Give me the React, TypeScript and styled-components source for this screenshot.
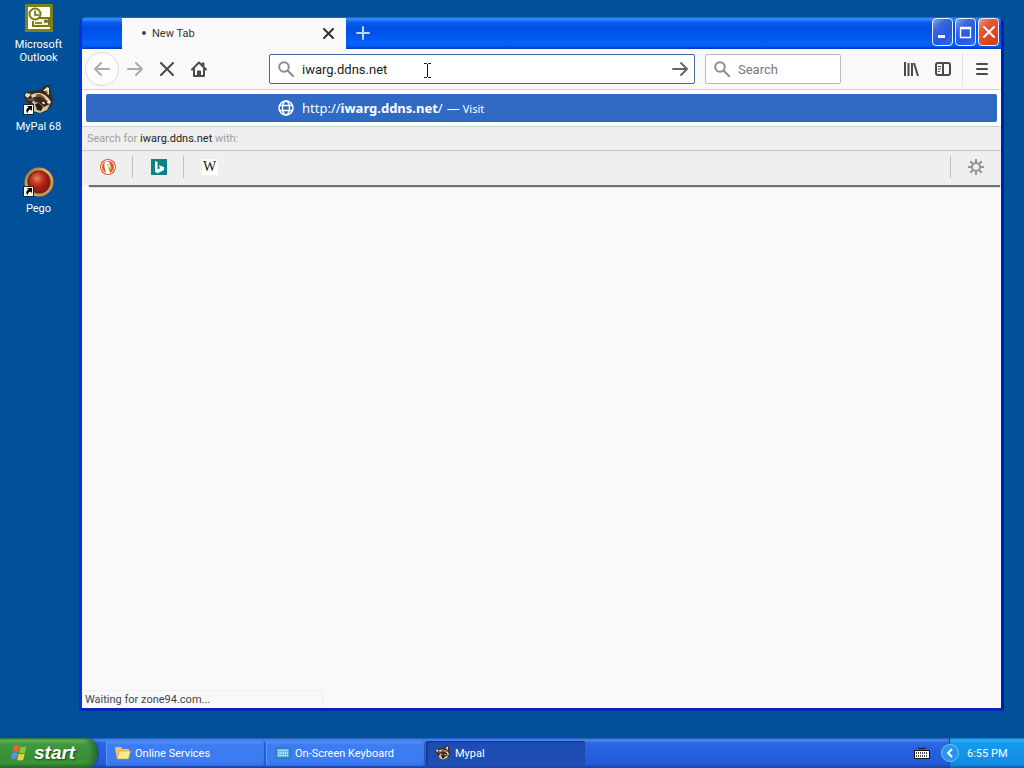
import React from 'react';
import styled, { createGlobalStyle, css } from 'styled-components';

const GlobalStyle = createGlobalStyle`
  *, *::before, *::after { box-sizing: border-box; }
  body {
    margin: 0;
    background: #00509a;
    font-family: Tahoma, Roboto, "Noto Sans", sans-serif;
    font-size: 11px;
    line-height: 13px;
    color: #333;
  }
  button, input { font: inherit; color: inherit; margin: 0; padding: 0; border: 0; background: none; }
  svg { display: block; flex: none; }
`;

/* ---------- desktop ---------- */

const Desktop = styled.div`
  min-height: 100vh;
  display: flex;
  flex-direction: column;
  background: #00509a;
`;

const Workspace = styled.main`
  flex: 1;
  display: flex;
  padding: 0 20px 27px 0;
`;

const Shortcuts = styled.nav`
  flex: none;
  width: 79px;
  padding-top: 2px;
`;

const Shortcut = styled.button`
  display: flex;
  flex-direction: column;
  align-items: center;
  justify-content: flex-start;
  gap: 4px;
  width: 77px;
  height: 82px;
  color: #fff;
  text-align: center;
`;

/* ---------- browser window ---------- */

const BrowserWindow = styled.section`
  flex: 1;
  min-width: 0;
  margin-top: 17px;
  display: flex;
  flex-direction: column;
  border: solid;
  border-width: 0 3px 3px;
  border-color: #0a3fe0 #001ea8 #0526b8 #0a30d8;
  border-radius: 7px 7px 0 0;
  background: #0058e6;
`;

const TitleBar = styled.header`
  height: 32px;
  display: flex;
  align-items: flex-end;
  padding: 0 2px 0 40px;
  border-radius: 4px 4px 0 0;
  background: linear-gradient(#0a5be8 0, #3a8dfd 2px, #0a60f0 5px, #0050e6 10px, #0055ea 18px, #0062fc 26px, #005cf5 29px, #0036b8 32px);
`;

const Tab = styled.div`
  display: flex;
  align-items: center;
  width: 224px;
  height: 31px;
  padding: 0 12px 1px 20px;
  background: #fafafa;
`;

const TabTitle = styled.span`
  flex: 1;
  display: flex;
  align-items: center;
  gap: 6px;
`;

const TabDot = styled.i`
  width: 4px;
  height: 4px;
  border-radius: 50%;
  background: #444;
`;

const GlyphButton = styled.button`
  display: flex;
  align-items: center;
  justify-content: center;
`;

const NewTabButton = styled(GlyphButton)`
  width: 34px;
  height: 31px;
  padding-bottom: 2px;
  margin-right: auto;
`;

const Controls = styled.div`
  align-self: flex-start;
  display: flex;
  gap: 2px;
  padding-top: 1px;
`;

const Control = styled.button<{ $close?: boolean }>`
  display: flex;
  align-items: center;
  justify-content: center;
  width: 21px;
  height: 28px;
  border: 1px solid #e8f0ff;
  border-radius: 4px;
  background: ${p => p.$close
    ? 'linear-gradient(135deg, #f0a48c 0, #e25b36 30%, #e04418 70%, #c8401a 100%)'
    : 'linear-gradient(135deg, #86a8f4 0, #3a67e0 30%, #2458de 65%, #2c70f4 100%)'};
`;

const Toolbar = styled.div`
  display: flex;
  align-items: center;
  height: 41px;
  padding: 0 3px;
  border-bottom: 1px solid #ccd6e0;
  background: #f9f9fa;
`;

const ToolButton = styled(GlyphButton)<{ $round?: boolean }>`
  flex: none;
  width: 32px;
  height: 32px;
  color: #4a4a4c;
  &:disabled { color: #acacae; }
  ${p => p.$round && css`
    width: 34px;
    height: 34px;
    border: 1px solid #dadadb;
    border-radius: 50%;
    background: #fdfdfd;
  `}
`;

const GoButton = styled(GlyphButton)`
  color: #666668;
`;

const Spring = styled.span`
  flex: none;
  width: 54px;
`;

const Divider = styled.span`
  width: 1px;
  height: 33px;
  margin: 0 3px;
  background: #e2e2e4;
`;

const Field = styled.label<{ $active?: boolean }>`
  position: relative;
  display: flex;
  align-items: center;
  gap: 8px;
  height: 30px;
  padding: 0 5px 0 8px;
  border: 1px solid ${p => (p.$active ? '#44699a' : '#bcbcbe')};
  border-radius: 2px;
  background: #fff;
  font-size: 13px;
  ${p => (p.$active ? 'flex: 1; min-width: 0;' : 'flex: none; width: 136px; margin-left: 10px; padding-right: 0;')}
  input { flex: 1; min-width: 0; height: 20px; outline: 0; color: #222; }
  input::placeholder { color: #777; opacity: 1; }
`;

const TextCursor = styled.svg`
  position: absolute;
  left: 153px;
  top: 8px;
`;

/* ---------- suggestions ---------- */

const Suggestions = styled.div`
  position: relative;
  z-index: 1;
  background: #efefef;
  box-shadow: 3px 6px 1px -4px #707070;
`;

const ResultList = styled.div`
  padding: 4px;
  border-bottom: 1px solid #c8d0d6;
  background: #fff;
`;

const Result = styled.button`
  display: flex;
  align-items: center;
  width: 100%;
  height: 28px;
  padding-left: 192px;
  border-radius: 2px;
  background: #316ac5;
  color: #fff;
  font-family: Tahoma, "Noto Sans", sans-serif;
  font-size: 13px;
  line-height: 18px;
`;

const ResultUrl = styled.span`
  margin: 0 4px 0 8px;
`;

const ResultAction = styled.span`
  margin: 2px 0 0 3px;
  font-size: 11px;
`;

const SearchHint = styled.p`
  margin: 0;
  height: 23px;
  padding: 5px;
  color: #a0a0a0;
  span { color: #222; }
`;

const Engines = styled.div`
  display: flex;
  align-items: center;
  justify-content: space-between;
  height: 35px;
  padding-bottom: 2px;
  border-top: 1px solid #c6c6c6;
`;

const EngineGroup = styled.div`
  display: flex;
`;

const Engine = styled(GlyphButton)<{ $line?: 'left' | 'right' }>`
  width: 51px;
  height: 22px;
  ${p => p.$line && `border-${p.$line}: 1px solid #c0c0c0;`}
  ${p => p.$line === 'right' && 'padding-left: 2px;'}
`;

const Page = styled.div`
  flex: 1;
  display: flex;
  align-items: flex-end;
  background: #f9f9fa;
`;

const Status = styled.div`
  width: 241px;
  height: 18px;
  padding: 2px 3px;
  border: solid #f1f1f2;
  border-width: 1px 1px 0 0;
  color: #444;
`;

/* ---------- taskbar ---------- */

const Taskbar = styled.footer`
  display: flex;
  height: 30px;
  background: linear-gradient(#1f4fb8 0, #4a8cf0 2px, #2c66e0 5px, #245ddb 20px, #235bd8 26px, #1941a5 30px);
  color: #fff;
`;

const StartButton = styled.button`
  display: flex;
  align-items: center;
  gap: 5px;
  width: 97px;
  padding: 0 0 1px 10px;
  border-radius: 0 12px 12px 0;
  background: linear-gradient(#2c7a2c 0, #6cbc6a 2px, #3f9a3f 6px, #388e38 20px, #3c963c 25px, #256a25 30px);
  box-shadow: inset -4px 0 5px #2a6e2a, 1px 0 2px #173c94;
  color: #fff;
  font: italic bold 19px/22px "Liberation Sans", sans-serif;
  text-shadow: 1px 1px 2px #1c431c;
`;

const TaskList = styled.div`
  flex: 1;
  display: flex;
  gap: 1px;
  padding: 3px 0 2px 9px;
`;

const Task = styled.button<{ $active?: boolean }>`
  display: flex;
  align-items: center;
  gap: 4px;
  width: 159px;
  padding: 0 9px 1px;
  border-radius: 2px;
  background: ${p => (p.$active ? '#1e4db4' : 'linear-gradient(#5793f8 0, #3d7df2 4px, #3c7cf2 20px, #3470e4 25px)')};
  box-shadow: ${p => (p.$active ? 'inset 1px 1px 2px #12307c' : 'inset -1px 0 1px #2458c0, inset 1px 0 1px #5c98fa')};
  color: #fff;
`;

const Tray = styled.div`
  display: flex;
  align-items: center;
`;

const TrayIcon = styled(GlyphButton)`
  width: 55px;
`;

const Clock = styled.div`
  position: relative;
  display: flex;
  align-items: center;
  align-self: stretch;
  width: 75px;
  padding-left: 17px;
  border-left: 1px solid #14469c;
  background: linear-gradient(#0f6cc0 0, #2cb4f4 2px, #149cec 5px, #1290e8 20px, #128ee4 26px, #0c5cb0 30px);
`;

const TrayToggle = styled.button`
  position: absolute;
  left: -9px;
  top: 6px;
`;

/* ---------- icons ---------- */

const OutlookIcon = () => (
  <svg width="32" height="32" viewBox="0 0 32 32">
    <rect x="2" y="2" width="28" height="28" fill="#7c8020" />
    <rect x="5" y="5" width="22" height="22" fill="#fffff0" />
    <path d="M14 16h12v8H10v-5" fill="#f4f4c8" stroke="#77791c" strokeWidth="2" />
    <circle cx="12" cy="12" r="5.500" fill="#fffff0" stroke="#77791c" strokeWidth="2" />
    <path d="M12 8.500V13h4M12 21h7M22 18.500h2v1.500h-2z" fill="none" stroke="#66681a" strokeWidth="1.600" />
  </svg>
);

const ShortcutArrow = () => (
  <g>
    <rect x="0.5" y="20.5" width="10" height="10" fill="#fff" stroke="#222" />
    <path d="M4 22h5v5l-1.600-1.600c-1.800.5-2.600 1.800-3 4.100-2-3.200-1-5.100 1.200-6z" fill="#000" />
  </g>
);

const Raccoon = () => (
  <g>
    <path d="M1 13 2 8l8-1 8-2 5-4 4 0 1 9 2 4-1 7-6 7-9 1-7-5-3-6z" fill="#3a2a20" />
    <path d="M2 12 3 9l5 1-3 4zM20 7l4-4 2 1v7l-2-1-1-3z" fill="#eadfc4" />
    <path d="M22 8l2-2 1 4z" fill="#8a6848" />
    <path d="M8 11c6-4 14-2 19 5l-3 1c-4-5-9-6-15-3z" fill="#e8d8b8" />
    <path d="M12 11c4-2 7-1 11 4l-6-2zM3 16l6-2 4 2-4 1z" fill="#76563a" />
    <path d="M7 22l5-4 4 1 5 4 6-3-3 6-7 3-7-2z" fill="#d8c4a0" />
    <path d="M12 20l4-1 4 4-2 4-4-1z" fill="#2a1c16" />
    <path d="M25 16l3 1-1 3-3-1z" fill="#fff4dc" />
    <path d="M9 18l2-1 1 1-2 1zM19 18l2 0 1 2-2 0z" fill="#fff" />
  </g>
);

const MypalIcon = () => (
  <svg width="32" height="32" viewBox="0 0 32 32">
    <Raccoon />
    <ShortcutArrow />
  </svg>
);

const PegoIcon = () => (
  <svg width="32" height="32" viewBox="0 0 32 32">
    <defs>
      <radialGradient id="ball" cx="40%" cy="35%">
        <stop offset="0" stopColor="#f08468" />
        <stop offset="0.5" stopColor="#c83c28" />
        <stop offset="1" stopColor="#a01c10" />
      </radialGradient>
      <linearGradient id="ring" x1="0" y1="0" x2="1" y2="1">
        <stop offset="0" stopColor="#8a6030" />
        <stop offset="0.45" stopColor="#e0b06a" />
        <stop offset="1" stopColor="#b88444" />
      </linearGradient>
    </defs>
    <circle cx="16" cy="16" r="14.500" fill="url(#ring)" />
    <circle cx="16" cy="16" r="11.500" fill="#6c2414" />
    <circle cx="16" cy="15.500" r="10" fill="url(#ball)" />
    <ShortcutArrow />
  </svg>
);

const ArrowIcon = ({ back }: { back?: boolean }) => (
  <svg width="18" height="18" viewBox="0 0 18 18" fill="none" stroke="currentColor" strokeWidth="2" strokeLinecap="round" strokeLinejoin="round">
    {back ? <path d="M16 9H2M8 3 2 9l6 6" /> : <path d="M2 9h14M10 3l6 6-6 6" />}
  </svg>
);

const CrossIcon = ({ size, color = 'currentColor' }: { size: number; color?: string }) => (
  <svg width={size} height={size} viewBox={`0 0 ${size} ${size}`} fill="none" stroke={color} strokeWidth="2" strokeLinecap="round">
    <path d={`M1 1 ${size - 1} ${size - 1}M${size - 1} 1 1 ${size - 1}`} />
  </svg>
);

const HomeIcon = () => (
  <svg width="16" height="16" viewBox="0 0 16 16" fill="none" stroke="currentColor" strokeWidth="2" strokeLinecap="round" strokeLinejoin="round">
    <path d="M1 8.500 8 1.500l7 7M3 8v7h10V8" />
    <path d="M11.500 2.500h1v2M7 14.500v-4h2v4" />
  </svg>
);

const MagnifierIcon = () => (
  <svg width="16" height="16" viewBox="0 0 16 16" fill="none" stroke="#8c8c8e" strokeWidth="2" strokeLinecap="round">
    <circle cx="6" cy="6" r="4.800" />
    <path d="M9.800 9.800 15 15" />
  </svg>
);

const GlobeIcon = () => (
  <svg width="16" height="16" viewBox="0 0 16 16" fill="none" stroke="#fff" strokeWidth="1.500">
    <circle cx="8" cy="8" r="7" />
    <ellipse cx="8" cy="8" rx="3.500" ry="7" />
    <path d="M1.500 5.500h13M1.500 10.500h13" />
  </svg>
);

const LibraryIcon = () => (
  <svg width="16" height="16" viewBox="0 0 16 16" fill="none" stroke="currentColor">
    <path d="M2 1v14M5.500 2v13M9 2v13M11 2l4 13" strokeWidth="2" />
  </svg>
);

const SidebarIcon = () => (
  <svg width="16" height="16" viewBox="0 0 16 16" fill="none" stroke="currentColor" strokeWidth="2">
    <rect x="1" y="2" width="14" height="12" rx="2" />
    <path d="M8 2v12" />
    <path d="M3 5.500h3M3 8h3M3 10.500h2" strokeWidth="1" />
  </svg>
);

const MenuIcon = () => (
  <svg width="12" height="12" viewBox="0 0 12 12" stroke="currentColor" strokeWidth="2" strokeLinecap="round">
    <path d="M1 1h10M1 6h10M1 11h10" />
  </svg>
);

const DuckIcon = () => (
  <svg width="16" height="16" viewBox="0 0 16 16">
    <circle cx="8" cy="8" r="8" fill="#de5833" />
    <circle cx="8" cy="8" r="6.500" fill="none" stroke="#fff" />
    <path d="M4.500 4c2-2.500 5.500-1.500 5.500 2l1 3-2 1 1 4c-2 .6-3 .2-4-.3L4.500 8z" fill="#fff" />
    <path d="M8 8h4l-1 2H8z" fill="#f9c000" />
    <path d="M9 11l3-1v3z" fill="#4cae3c" />
    <circle cx="8" cy="6" r=".7" fill="#2d4f8e" />
  </svg>
);

const BingIcon = () => (
  <svg width="16" height="16" viewBox="0 0 16 16">
    <rect width="16" height="16" fill="#0c8484" />
    <path d="M4 2l2.500 1v7.500L9 9.200 7.800 6.200 13 8v3L6.500 14.200 4 12.700z" fill="#fff" />
  </svg>
);

const EngineLetter = styled.span`
  width: 16px;
  background: #fff;
  color: #111;
  font: 14px/16px "Liberation Serif", serif;
  text-align: center;
`;

const GearIcon = () => (
  <svg width="16" height="16" viewBox="0 0 16 16" fill="none" stroke="#949494" strokeWidth="2">
    <circle cx="8" cy="8" r="4" />
    <path d="M8 0v3M8 13v3M0 8h3M13 8h3M2.300 2.300l2.200 2.200M11.500 11.500l2.200 2.200M2.300 13.700l2.200-2.200M11.500 4.500l2.200-2.200" />
  </svg>
);

const WindowsFlag = () => (
  <svg width="19" height="18" viewBox="0 0 19 18">
    <path d="M4 2c2-1.500 4-1 5.500 0L8 8C6 7 4.500 7 2.500 8z" fill="#f0622c" />
    <path d="M10.500 2.500c2 1 4 1 6-.2L15 8.500c-2 1-4 1-6-.2z" fill="#84c83c" />
    <path d="M2.200 9.200c2-1 4-1 5.600 0l-1.600 6c-1.600-1-3.600-1-5.400 0z" fill="#5c8ef0" />
    <path d="M8.800 9.500c2 1 4 1 6 0l-1.600 6.300c-2 1.200-4 1-6-.2z" fill="#fccc30" />
  </svg>
);

const FolderIcon = () => (
  <svg width="16" height="16" viewBox="0 0 16 16">
    <path d="M0 3l1-1h5l1 2h7v3H4l-1 7H2z" fill="#f0c850" />
    <path d="M4 6h11.500l-2 8H2z" fill="#fdea8c" stroke="#c89a28" strokeWidth=".6" />
  </svg>
);

const KeyboardIcon = () => (
  <svg width="16" height="16" viewBox="0 0 16 16">
    <rect x="1" y="3" width="14" height="10" rx="1" fill="#50a8e0" stroke="#2468a8" />
    <path d="M3 5.500h10M3 8h10M3 10.500h10" stroke="#d4f4fc" strokeDasharray="1.500 .7" strokeWidth="1.400" />
  </svg>
);

const TrayKeyboard = () => (
  <svg width="16" height="14" viewBox="0 0 16 14">
    <path d="M4 1l2 2 2-1 2 1 2-2" fill="none" stroke="#111" />
    <rect x=".5" y="4.500" width="15" height="8" fill="#fff" stroke="#111" />
    <path d="M2 7h12M2 10h12" stroke="#111" strokeDasharray="1 1" strokeWidth="1.500" />
  </svg>
);

const CollapseIcon = () => (
  <svg width="18" height="18" viewBox="0 0 18 18">
    <circle cx="9" cy="9" r="8.500" fill="#2c92ea" stroke="#6cc4f8" />
    <path d="M11 5 7 9l4 4" fill="none" stroke="#fff" strokeWidth="2" />
  </svg>
);

export default function App() {
  return (
    <Desktop>
      <GlobalStyle />
      <Workspace>
        <Shortcuts>
          <Shortcut><OutlookIcon /><span>Microsoft<br />Outlook</span></Shortcut>
          <Shortcut><MypalIcon /><span>MyPal 68</span></Shortcut>
          <Shortcut><PegoIcon /><span>Pego</span></Shortcut>
        </Shortcuts>
        <BrowserWindow>
          <TitleBar>
            <Tab>
              <TabTitle><TabDot />New Tab</TabTitle>
              <GlyphButton aria-label="Close tab"><CrossIcon size={11} /></GlyphButton>
            </Tab>
            <NewTabButton aria-label="New tab">
              <svg width="14" height="14" viewBox="0 0 14 14" stroke="#b8dcff" strokeWidth="2" strokeLinecap="round"><path d="M7 1v12M1 7h12" /></svg>
            </NewTabButton>
            <Controls>
              <Control aria-label="Minimize">
                <svg width="13" height="13" viewBox="0 0 13 13"><path d="M2 9h7v3H2z" fill="#fff" /></svg>
              </Control>
              <Control aria-label="Maximize">
                <svg width="13" height="13" viewBox="0 0 13 13"><path d="M1.500 1.500h10v10h-10zM1 2.500h11" fill="none" stroke="#fff" strokeWidth="1.400" /></svg>
              </Control>
              <Control $close aria-label="Close"><CrossIcon size={12} color="#fff" /></Control>
            </Controls>
          </TitleBar>
          <Toolbar>
            <ToolButton $round disabled aria-label="Back"><ArrowIcon back /></ToolButton>
            <ToolButton disabled aria-label="Forward"><ArrowIcon /></ToolButton>
            <ToolButton aria-label="Stop"><CrossIcon size={14} /></ToolButton>
            <ToolButton aria-label="Home"><HomeIcon /></ToolButton>
            <Spring />
            <Field $active>
              <MagnifierIcon />
              <input aria-label="Address" defaultValue="iwarg.ddns.net" />
              <GoButton aria-label="Go"><ArrowIcon /></GoButton>
              <TextCursor width="9" height="15" viewBox="0 0 9 15" fill="none" stroke="#111">
                <path d="M1 .5h2.500l1 1 1-1H8M4.500 1v13M1 14.500h2.500l1-1 1 1H8" />
              </TextCursor>
            </Field>
            <Field>
              <MagnifierIcon />
              <input aria-label="Search" placeholder="Search" />
            </Field>
            <Spring />
            <ToolButton aria-label="Library"><LibraryIcon /></ToolButton>
            <ToolButton aria-label="Sidebars"><SidebarIcon /></ToolButton>
            <Divider />
            <ToolButton aria-label="Menu"><MenuIcon /></ToolButton>
          </Toolbar>
          <Suggestions>
            <ResultList>
              <Result>
                <GlobeIcon />
                <ResultUrl>http://<b>iwarg.ddns.net</b>/</ResultUrl>
                —
                <ResultAction>Visit</ResultAction>
              </Result>
            </ResultList>
            <SearchHint>Search for <span>iwarg.ddns.net</span> with:</SearchHint>
            <Engines>
              <EngineGroup>
                <Engine $line="right" aria-label="DuckDuckGo"><DuckIcon /></Engine>
                <Engine $line="right" aria-label="Bing"><BingIcon /></Engine>
                <Engine aria-label="Wikipedia"><EngineLetter>W</EngineLetter></Engine>
              </EngineGroup>
              <Engine $line="left" aria-label="Search settings"><GearIcon /></Engine>
            </Engines>
          </Suggestions>
          <Page>
            <Status>Waiting for zone94.com...</Status>
          </Page>
        </BrowserWindow>
      </Workspace>
      <Taskbar>
        <StartButton><WindowsFlag />start</StartButton>
        <TaskList>
          <Task><FolderIcon />Online Services</Task>
          <Task><KeyboardIcon />On-Screen Keyboard</Task>
          <Task $active>
            <svg width="16" height="16" viewBox="0 0 32 32"><Raccoon /></svg>
            Mypal
          </Task>
        </TaskList>
        <Tray>
          <TrayIcon aria-label="Keyboard"><TrayKeyboard /></TrayIcon>
          <Clock>
            <TrayToggle aria-label="Show hidden icons"><CollapseIcon /></TrayToggle>
            <time>6:55 PM</time>
          </Clock>
        </Tray>
      </Taskbar>
    </Desktop>
  );
}
